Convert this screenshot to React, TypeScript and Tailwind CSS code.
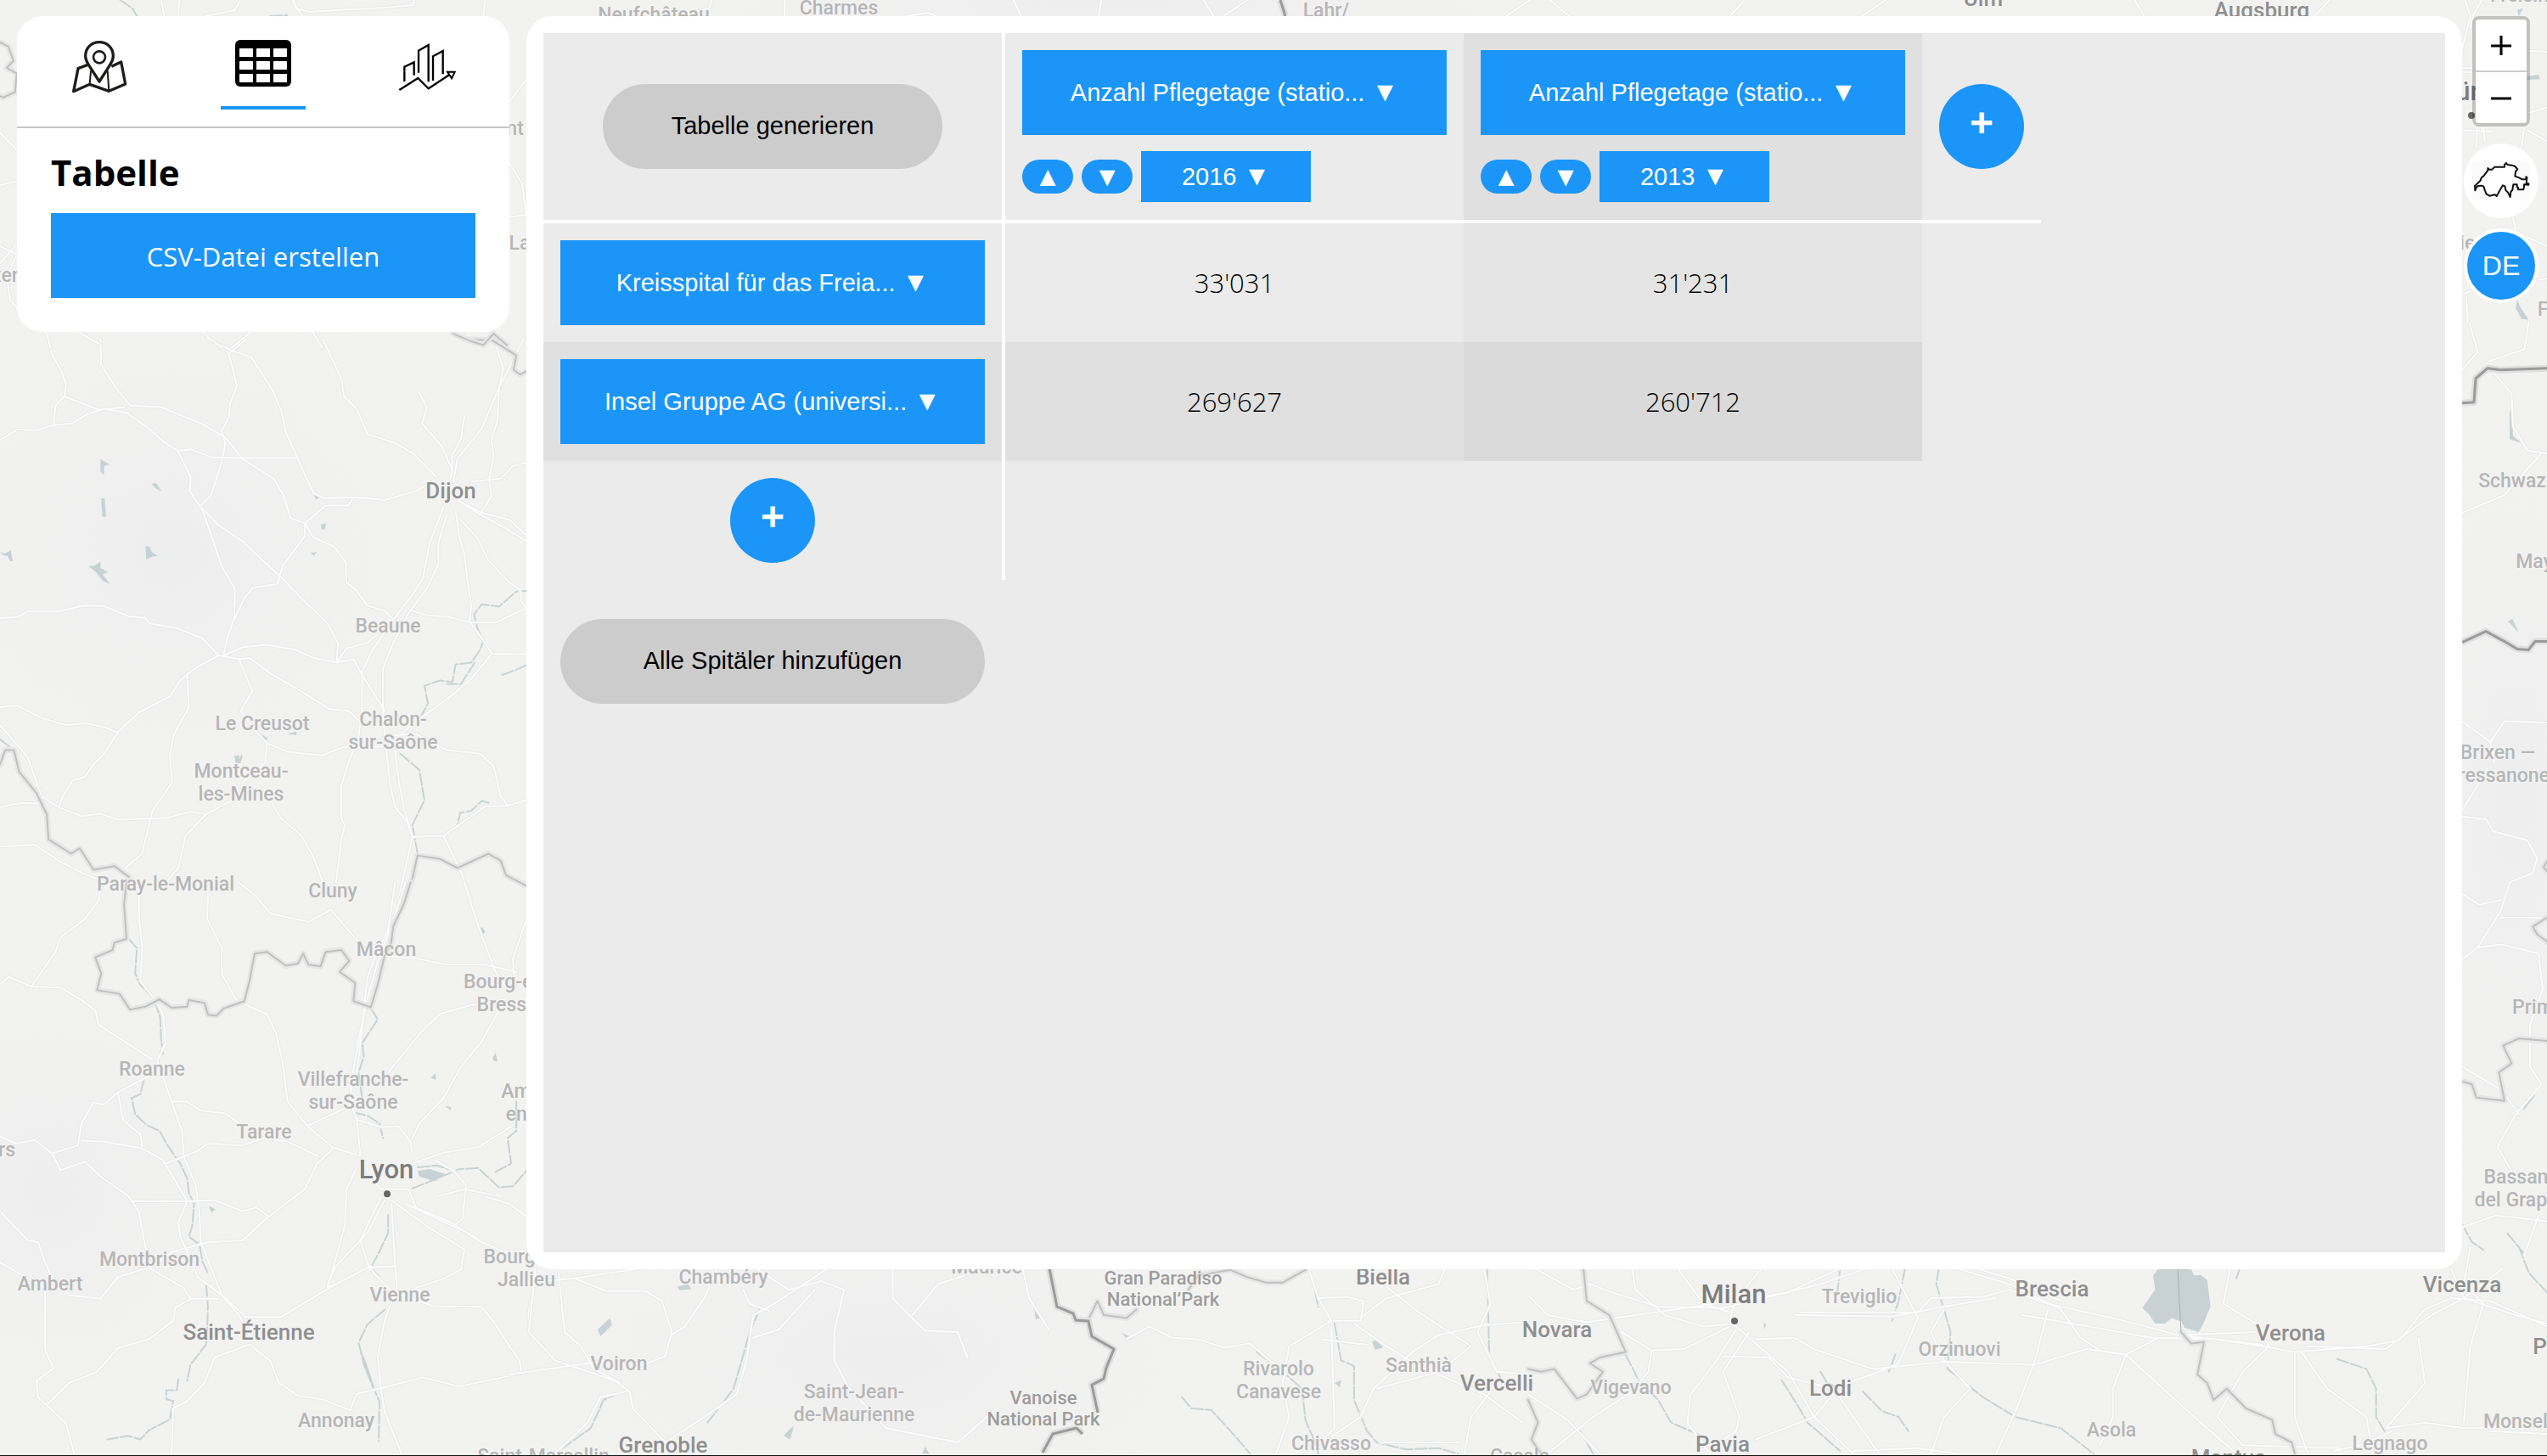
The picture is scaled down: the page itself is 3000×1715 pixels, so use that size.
import React, { useState } from "react";

/* ---------- Map background ---------- */

type Layer = { transform: string; roads: string[]; rivers: string[]; borders: string[]; lakes: string[] };

const LAYERS: Layer[] = [
  {
    transform: "translate(0 400) scale(0.40816 0.42091)",
    roads: [
      "M138 0L150 42L178 90L190 125L186 160L160 185L155 240L210 235L250 210L300 195L365 205L430 250L470 285L513 312L530 345L550 385L548 425L585 480L610 550L640 635L678 700L676 780L655 840L645 885",
      "M0 282L50 252L105 255L155 240",
      "M186 160L240 180L285 197L360 190",
      "M290 0L292 70L330 130L375 185L465 190L580 235L650 275L700 335L790 390L820 440L838 500L880 515L905 555L965 580L998 625L1000 680L1030 705L1060 745L1110 760L1135 785",
      "M600 0L680 35L725 50L785 140L812 200L825 260L855 325L880 380L905 430L935 445L1020 442L1110 450L1200 425L1235 405",
      "M710 0L660 40L684 130L664 180L660 220L640 255L650 290L642 335L610 435L580 465",
      "M513 312L550 308L610 330L700 332L855 332",
      "M580 470L630 520L700 565L770 630L805 660L870 725L945 795L975 850L972 905L1020 895L1045 940L1110 1040",
      "M880 515L880 550L815 635L800 685L730 695L705 725L678 780",
      "M880 515L940 465L1005 465L1020 442",
      "M932 0L985 110L993 160L1030 195L1060 265L1140 290L1190 318L1260 385",
      "M1208 145L1232 190L1218 235L1275 300L1305 365L1300 390",
      "M1340 215L1330 280L1305 325L1303 380",
      "M1510 0L1445 125L1390 250L1320 335L1308 400",
      "M1425 0L1452 80L1440 140L1435 230L1418 280L1425 330L1412 390L1418 440L1385 490",
      "M1519 345L1480 355L1445 390L1360 398",
      "M1320 450L1385 490L1460 530L1519 565",
      "M1330 455L1390 485L1470 505L1519 548",
      "M1280 470L1240 570L1220 670L1190 715L1135 785L1075 870L1045 930L1045 1040L1035 1110L1000 1200L985 1250L985 1340L995 1360L985 1400L970 1520",
      "M1290 490L1265 570L1265 630L1230 700L1180 765L1135 850L1105 920L1105 1040L1110 1110",
      "M1315 480L1325 550L1340 600L1350 680L1360 745L1355 790L1400 850L1420 880L1519 882",
      "M1325 500L1380 560L1410 620L1470 680L1500 700L1505 735L1519 752",
      "M1190 760L1230 772L1290 776L1360 793L1430 793L1519 752",
      "M1420 880L1360 950L1300 1000L1200 1070L1140 1120",
      "M0 780L50 778L80 762L170 762L240 745L300 747L370 775L420 780L430 795L510 808L585 838L630 885L690 895L720 892L780 935L860 980L950 1035L1005 1040L1040 1070",
      "M630 885L565 920L520 955L490 1000L400 1045L340 1100L300 1160L270 1190L245 1225L210 1235L180 1280L170 1310",
      "M645 885L700 862L770 855L850 868L900 890L972 905L1000 865L1060 850L1090 825",
      "M690 895L728 985L695 1040L740 1100L770 1130L765 1185L700 1240",
      "M540 935L545 1030L500 1110L490 1170L497 1240L440 1320L410 1440L350 1490",
      "M0 1030L50 1025L120 1060L190 1080L250 1075L300 1085L340 1102",
      "M0 1080L80 1170L120 1280L170 1310L235 1335L290 1328L340 1345L480 1340L550 1322L595 1330L700 1275",
      "M0 1310L60 1298L120 1300",
      "M0 1420L100 1415L170 1460L240 1495L300 1520",
      "M770 1130L830 1155L930 1165L990 1142L1105 1140",
      "M1110 1110L1200 1105L1290 1150L1385 1160L1425 1195L1445 1280L1465 1305L1519 1290",
      "M1115 1150L1125 1240L1140 1310L1175 1350L1190 1393L1280 1390L1400 1308L1465 1305",
      "M1140 1150L1150 1230L1165 1310L1190 1393L1170 1480L1150 1568",
      "M1280 1390L1330 1490L1360 1568",
      "M780 1290L810 1340L870 1390L905 1450L935 1530",
      "M595 1330L535 1390L515 1480L480 1520",
    ],
    rivers: [
      "M1519 704L1490 706L1440 748L1390 742L1368 770L1378 810L1395 845L1385 870L1360 905L1315 910L1305 960L1270 955L1225 970L1235 1020L1212 1060",
      "M1370 905L1330 965L1290 965",
      "M1155 1160L1210 1205L1225 1290L1190 1360L1205 1440",
      "M1519 912L1490 925L1448 940",
      "M1410 1298L1390 1292L1360 1320L1328 1325L1320 1360",
      "M0 1120L40 1150",
    ],
    borders: [
      "M1340 0L1390 2L1420 2L1490 45L1482 85L1500 98L1519 90",
      "M0 1190L15 1150L40 1150L55 1210L105 1270L135 1330L140 1400L205 1440L230 1425L270 1485L330 1475L372 1505",
      "M1205 1445L1270 1455L1320 1480L1410 1440L1445 1460L1460 1500L1519 1530",
      "M1205 1445L1190 1510L1168 1568",
    ],
    lakes: [
      "M290 335L316 350L300 355L300 380L290 370Z",
      "M437 405L450 402L466 425L450 418Z",
      "M292 445L302 445L306 498L295 495Z",
      "M420 578L432 580L438 595L455 607L440 608L422 617Z",
      "M255 635L275 632L290 622L290 640L312 652L296 658L318 685L298 676L275 650Z",
      "M0 595L14 600L32 590L34 608L38 622L28 620L22 606L10 605Z",
      "M926 518L940 516L938 532L928 532Z",
      "M897 598L915 595L905 607Z",
      "M905 436L925 441L912 448Z",
      "M676 1166L690 1164L690 1175L698 1160L700 1172L692 1188L680 1185Z",
      "M752 1105L775 1118L760 1122Z",
      "M828 1105L856 1098L855 1108Z",
    ],
  },
  {
    transform: "translate(0 1040) scale(0.40816 0.43048)",
    roads: [
      "M292 0L285 50L245 100L175 150L160 190L120 245L90 285L175 288L240 325L275 350L285 390L350 430L440 485",
      "M0 280L25 258L90 285",
      "M400 0L402 100L410 180L405 270L445 318L470 360L478 440L455 485",
      "M690 0L740 40L780 85L890 108L955 75L1000 125L1045 175",
      "M600 30L598 100L640 180L640 250L680 320L725 342L770 360L795 410L815 490L830 600L890 670L960 725L1040 750",
      "M1170 0L1130 120L1095 200L1060 320L1035 430L1015 540L1010 600L1030 650L1040 750",
      "M1140 0L1120 130L1080 210L1060 260L1045 400L1030 520",
      "M1340 0L1380 120L1430 245L1470 300",
      "M1100 200L1200 208L1290 225L1400 225L1490 245",
      "M1519 100L1480 210L1485 290",
      "M1460 320L1365 335L1270 360L1220 405L1120 520",
      "M1440 350L1390 435L1330 505L1280 590L1210 660L1190 700",
      "M455 490L495 600L525 680L530 750L565 830L575 900L580 985L640 1130L690 1185L720 1240",
      "M495 600L540 600L580 625L650 632L690 660",
      "M440 525L340 575L300 608L270 602L235 660L225 720L150 742L175 788L245 765L290 805L370 858L400 900L420 1000L430 1040",
      "M340 575L355 650L405 690L410 722",
      "M0 695L45 715L100 705L150 742",
      "M235 707L300 710L410 728L470 760L540 872L515 930L520 970L550 1030L570 1080L640 1130",
      "M380 873L540 873L620 870L700 900L740 890L775 915L700 980L600 985L500 1010L430 1055L340 1080L290 1140L200 1130L150 1080L130 1040L110 985L80 980L0 900",
      "M480 770L570 735L600 715L700 720L760 700L830 710L920 750",
      "M775 915L880 840L915 770L960 730",
      "M430 1055L530 1110L550 1140L505 1165L500 1200L430 1250L340 1275L280 1340L200 1370L135 1430",
      "M0 1040L45 1065L130 1110L130 1280L155 1330L105 1365L110 1410L190 1480L215 1568",
      "M640 1130L710 1190L810 1190L950 1110L1060 1055L1140 1050",
      "M550 1140L630 1140",
      "M720 1265L620 1300L590 1370L540 1420L500 1440L495 1568",
      "M720 1265L780 1310L805 1370L860 1405L930 1415L1010 1445L1030 1400L1100 1385L1220 1355L1325 1380L1450 1355L1568 1330",
      "M1030 650L1100 670L1150 668L1185 710L1190 740",
      "M1040 790L1090 830L1100 840L1180 840L1200 890L1300 930L1380 980L1450 1010",
      "M1130 870L1230 940L1340 1005L1330 1060L1280 1085L1200 1110",
      "M1190 770L1280 740L1380 725L1480 665",
      "M1110 870L1060 960L970 1050L945 1100",
      "M1130 880L1140 1050L1145 1110L1110 1200L1090 1300L1100 1390L1110 1450L1160 1568",
      "M1100 860L1040 980L1065 1055L1130 1120L1250 1160L1390 1162L1430 1210L1470 1270L1500 1310L1505 1345",
      "M1030 780L1000 840L995 940L960 1060L945 1110L1000 1085L1070 1050",
      "M1255 760L1310 790L1345 830L1335 920L1310 940",
      "M1400 860L1470 880L1519 915",
      "M1540 1110L1525 1180L1530 1240L1568 1270",
      "M890 665L970 630L1030 600",
      "M1260 860L1340 840L1450 860",
      "M1170 880L1350 960L1400 990",
    ],
    rivers: [
      "M372 155L395 180L390 250L405 280L445 320L462 370L465 430L470 470",
      "M415 540L405 580L380 590L390 635L425 665L460 680L480 715L520 770L540 810L545 850L560 880L555 940L545 970L575 990L585 1040L600 1070",
      "M595 1100L600 1160L598 1220L595 1265L550 1320L540 1365",
      "M515 1360L510 1390L480 1390L480 1415L500 1420L490 1470L430 1500L405 1525L370 1515L310 1525",
      "M1070 345L1090 375L1045 440L1050 475L1035 520L1045 590",
      "M1020 630L1060 638L1095 660L1105 700",
      "M1190 838L1250 815L1325 785L1380 782L1440 835L1480 832L1519 790",
      "M1205 780L1260 775L1310 790",
      "M1490 600L1490 680L1465 700L1475 770L1425 795",
      "M1120 910L1120 960L1090 1020L1070 1055L1095 1080",
      "M1110 1170L1060 1210L1035 1260L1050 1320L1080 1390L1095 1420L1093 1530",
    ],
    borders: [
      "M365 0L358 60L365 155L330 165L325 185L275 205L292 250L280 295L345 305L375 348L420 340L460 320L495 343L540 340L545 322L590 330L600 362L625 365L645 345L705 325L720 270L735 195L770 190L825 228L860 222L875 195L890 225L925 230L940 190L985 185L1008 215L980 245L1025 275L1020 325L1070 342",
      "M1185 0L1165 60L1135 120L1128 170L1110 200L1090 280L1070 342",
    ],
    lakes: [
      "M1205 790L1240 785L1285 798L1255 818L1210 805Z",
      "M1383 130L1392 122L1400 135L1388 148Z",
      "M1422 480L1430 466L1436 490L1424 488Z",
      "M1243 535L1257 522L1258 540Z",
      "M1283 612L1302 615L1300 624Z",
      "M602 885L622 895L610 903Z",
      "M1035 1265L1055 1310L1085 1395L1060 1350Z",
    ],
  },
  {
    transform: "translate(600 1470) scale(0.7653 0.33333)",
    roads: [
      "M40 75L30 300L70 400L160 470L185 510L190 570L240 690",
      "M75 75L85 300L110 350L130 430L170 480",
      "M0 130L100 110L200 75",
      "M100 110L150 155L210 155L235 190L250 300L240 385L190 430",
      "M320 75L300 180L270 280L250 310",
      "M490 75L400 210L375 240L365 400L350 520L300 600L240 690",
      "M380 75L430 150L480 120",
      "M480 120L515 150L500 300L500 400L520 490L580 640L690 690L750 570",
      "M375 320L415 290L470 150",
      "M360 150L370 200L400 225",
      "M590 75L590 180L620 250L640 295L690 300L705 390",
      "M620 240L660 130L700 100",
      "M790 75L800 180L830 290",
      "M0 450L60 430L150 400",
      "M180 510L140 530L120 620L70 730",
      "M950 325L985 280L1020 320L1060 325L1100 355L1140 340L1160 380L1195 450",
      "M1230 75L1245 180L1265 260L1200 350L1190 480L1200 600L1180 730",
      "M1245 180L1290 175L1315 190L1310 260L1260 260",
      "M1310 250L1350 180L1430 130L1440 75",
      "M1300 270L1350 350L1400 420L1500 520L1560 620",
      "M1250 325L1320 345",
      "M1568 265L1500 275L1430 310L1390 370L1330 500L1310 600L1265 670",
      "M1265 280L1270 640L1230 730",
      "M1335 500L1430 440L1480 350L1400 230L1350 140",
      "M1500 75L1510 200L1490 300L1520 440L1568 450",
      "M1510 510L1480 600L1470 730",
      "M1340 690L1460 690",
    ],
    rivers: [
      "M385 220L370 300L345 500L305 620",
      "M170 515L145 540L125 640L70 730",
      "M1035 530L1050 570L1080 575L1110 650L1140 730",
      "M1270 270L1280 400L1300 420L1300 540L1320 650L1335 690L1380 715L1430 710L1460 730",
      "M1150 370L1190 440L1220 500L1225 610L1240 690L1245 730",
      "M1505 75L1508 380L1525 460",
      "M1240 160L1245 210",
    ],
    borders: [
      "M890 260L905 190L915 240L950 250L965 220",
      "M1045 150L1060 100L1110 80L1135 105L1165 125L1190 125L1225 80",
    ],
    lakes: [
      "M155 250L158 275L140 315L136 290Z",
      "M258 140L275 130L280 148L262 152Z",
      "M438 630L432 680L422 665Z",
      "M808 220L818 250L810 255Z",
      "M942 303L960 320L952 328Z",
      "M1328 335L1336 320L1344 355L1332 362Z",
      "M1270 480L1280 470L1278 495Z",
      "M635 730L640 705L646 730Z",
    ],
  },
  {
    transform: "translate(1800 1470) scale(0.7653 0.33333)",
    roads: [
      "M0 170L30 240L90 265L150 245L270 205L400 160L480 75",
      "M10 75L70 150L95 130L130 160L200 210L300 215L450 130L520 75",
      "M160 75L165 150L210 240L270 280L320 270",
      "M230 75L270 200L310 230",
      "M360 75L320 180L310 260L330 300L400 440L440 600L500 730",
      "M410 240L560 245L640 210L720 180",
      "M420 230L600 230L620 180L700 175L740 150L800 200L900 250L1000 310L1130 345",
      "M760 240L850 275L960 320L1060 325L1130 350L1180 370",
      "M660 75L740 130L820 220L850 320L880 365L920 380L1020 590L1090 730",
      "M690 75L740 110L820 190",
      "M0 520L60 610L110 730",
      "M130 280L190 365L240 360L310 280",
      "M190 365L185 440L160 510L100 600L30 730",
      "M320 290L290 400L250 520L245 620L280 730",
      "M340 300L300 440L325 600L320 650L300 680",
      "M350 325L410 320L440 360L530 430L640 405L780 415L860 360L920 380",
      "M540 440L480 490L440 600L350 680",
      "M300 385L370 390L400 460L470 500L540 730",
      "M640 220L620 300L640 400L680 500L640 600L620 730",
      "M800 220L780 400L750 580L720 730",
      "M970 320L920 380L900 500L900 600L880 700",
      "M1080 75L1070 200L1120 270L1140 350L1100 440L1060 600L1100 700L1250 710",
      "M1180 370L1180 600L1200 730",
      "M1190 370L1230 500L1290 600L1300 730",
      "M1120 300L1000 310",
      "M1180 370L1290 350L1340 330L1380 220L1420 180L1480 190L1568 280",
      "M1200 350L1320 360L1390 240L1440 180L1500 75",
      "M1370 320L1380 480L1320 640L1380 620L1440 640L1568 630",
      "M1450 0L1440 130L1470 200L1450 350L1440 620",
      "M1420 75L1440 180L1520 240L1568 270",
      "M1330 650L1280 700L1240 720",
      "M1480 650L1568 660",
      "M500 720L600 710L660 730",
      "M560 75L600 250L570 410L540 440",
    ],
    rivers: [
      "M150 380L170 470L200 540L220 620L270 670",
      "M390 470L415 560L430 620L480 720",
      "M480 75L476 160",
      "M580 75L570 190L560 260",
      "M632 75L628 130L640 220L650 300L645 430L700 530L750 600L820 640L870 730",
      "M565 380L555 440",
      "M515 510L545 580L570 600L585 650",
      "M450 440L460 480L480 500",
      "M1245 395L1290 430L1305 500L1305 600L1318 650",
      "M1095 75L1090 110",
      "M80 650L100 730",
      "M1525 0L1540 90L1568 160",
    ],
    borders: [
      "M85 75L90 190L125 240L150 370L110 390L95 410L115 440L90 520L75 535L60 490L40 430L20 440L0 430",
      "M1005 300L1020 340L1040 335L1030 450L1045 480L1055 540L1075 500L1105 570L1145 610L1150 660L1175 690L1180 730",
      "M0 540L15 620L5 680L20 730",
    ],
    lakes: [
      "M970 75H1020L1025 100L1035 98L1045 115L1050 210L1040 265L1032 300L1010 285L1005 262L990 250L980 270L965 270L955 235L945 215L965 150L962 100Z",
      "M362 265L366 275L363 290Z",
    ],
  },
  {
    transform: "translate(2860 380) scale(0.33333 0.70153)",
    roads: [
      "M145 0L175 50L120 80",
      "M355 0L340 45L215 65",
      "M215 75L295 120L300 175L350 215L420 220",
      "M120 320L270 290L400 220",
      "M120 670L220 705L270 670L420 672",
      "M235 740L220 705",
      "M120 820L210 750",
      "M120 830L205 835L230 855L350 870L385 900L370 925L290 940L255 990L175 1050L120 1070",
      "M120 960L180 978L260 970",
      "M255 1000L420 1000",
      "M175 1050L260 1045L390 1060L405 1120L360 1180L360 1250L400 1280L310 1330L245 1385L300 1430",
      "M120 1250L260 1290L320 1330",
      "M120 1520L240 1500L420 1510",
      "M340 1568L390 1500",
    ],
    rivers: ["M120 1515L155 1545L195 1558", "M280 1530L340 1565"],
    borders: [
      "M120 1275L155 1280L170 1302L270 1308L250 1260L295 1245L265 1215L320 1203L420 1207",
      "M420 1000L370 1015L385 1028L420 1040",
      "M420 905L408 915L420 922",
    ],
    lakes: ["M288 148H299V190L330 203L288 196Z", "M282 502L298 498L320 521Z", "M335 1325L345 1305L380 1298Z"],
  },
  {
    transform: "scale(0.3954 0.33333)",
    roads: [
      "M480 0L490 57",
      "M535 0L530 57",
      "M716 0L700 37L610 57",
      "M875 0L880 30L925 42L1010 35L1140 28L1230 18L1235 0",
      "M870 0L900 57",
      "M1445 0L1440 57",
      "M0 470L50 530",
      "M0 655L50 640",
      "M0 870L50 900L20 980L30 1060L80 1130L140 1180L150 1230",
      "M0 930L45 870",
      "M230 1172L295 1215",
      "M600 1172L660 1230",
      "M750 1172L690 1230",
      "M1568 280L1517 360",
      "M1517 575L1555 650L1568 760L1517 768",
      "M930 1172L960 1230",
    ],
    rivers: ["M358 0L395 30L408 57", "M805 57L855 54"],
    borders: ["M0 150L25 165L40 215L20 240L50 260L45 325L10 345L0 340", "M1350 1180L1400 1205L1440 1220L1470 1180L1510 1220"],
    lakes: [],
  },
  {
    transform: "translate(620 0) scale(0.57398 0.33333)",
    roads: [
      "M380 0L375 30L310 57",
      "M530 0L530 57",
      "M780 57L825 45L840 57",
      "M1000 0L1015 57",
      "M1180 0L1175 57",
      "M1390 0L1410 57",
      "M1480 0L1430 57",
      "M2060 0L2010 57",
      "M2100 0L2140 57",
      "M2500 0L2470 57",
      "M2790 0L2740 57",
      "M3300 0L3320 57",
      "M3700 0L3670 57",
    ],
    rivers: [],
    borders: [],
    lakes: [],
  },
  {
    transform: "translate(2860 0) scale(0.33333)",
    roads: [
      "M130 0L150 57L120 170L120 200",
      "M190 0L160 50L150 100",
      "M120 240L160 240",
      "M120 255L160 255",
      "M350 180L420 182",
      "M350 400L420 380",
      "M175 450L170 520",
      "M195 450L200 500",
      "M340 450L330 520L300 560",
      "M350 460L420 500",
      "M120 460L230 465",
      "M300 770L310 820L420 870",
      "M135 1050L140 1140",
      "M390 990L420 985",
      "M120 1040L150 1030",
    ],
    rivers: [],
    borders: [],
    lakes: ["M350 270L390 264L395 280L350 282Z", "M315 35L335 30L320 57Z", "M315 1060L325 1085L355 1130L330 1128L310 1090Z"],
  },
];

const STRONG_BORDERS = [
  "M1236 1495L1245 1540L1264 1548L1267 1556L1282 1557L1286 1575L1312 1590L1303 1612L1300 1625L1286 1632L1293 1665",
  "M1275 1690L1268 1683L1240 1690L1228 1712",
  "M2900 475L2914 474L2916 446L2930 434L2945 436L3000 434",
  "M2900 757L2928 744L2950 756L2965 765L2978 766L2986 756L3000 756",
  "M1508 0L1514 19",
];

const LINE = "fill-none";

function MapDrawing() {
  return (
    <svg className="h-full w-full" viewBox="0 0 3000 1715" preserveAspectRatio="none" aria-hidden="true">
      <defs>
        <radialGradient id="relief">
          <stop offset="0" stopColor="#ebecec" stopOpacity="0.7" />
          <stop offset="1" stopColor="#f2f2f1" stopOpacity="0" />
        </radialGradient>
      </defs>
      <rect width="3000" height="1715" fill="#f2f2f1" />
      <ellipse cx="200" cy="650" rx="380" ry="350" fill="url(#relief)" />
      <ellipse cx="60" cy="1400" rx="260" ry="300" fill="url(#relief)" />
      <ellipse cx="1050" cy="1600" rx="520" ry="260" fill="url(#relief)" />
      <ellipse cx="2960" cy="950" rx="200" ry="600" fill="url(#relief)" />
      <ellipse cx="1300" cy="0" rx="700" ry="100" fill="url(#relief)" />
      {LAYERS.map((layer) => (
        <g key={layer.transform} transform={layer.transform} strokeLinejoin="round" strokeLinecap="round">
          {layer.lakes.map((d) => (
            <path key={d} d={d} fill="#c8d1d3" />
          ))}
          {layer.rivers.map((d) => (
            <path key={d} d={d} className={LINE} stroke="#c9d2d4" strokeWidth="2" strokeDasharray="14 3" vectorEffect="non-scaling-stroke" />
          ))}
          {layer.roads.map((d) => (
            <path key={d} d={d} className={LINE} stroke="#e9eaea" strokeWidth="4" vectorEffect="non-scaling-stroke" />
          ))}
          {layer.roads.map((d) => (
            <path key={"top" + d} d={d} className={LINE} stroke="#fcfcfc" strokeWidth="2" vectorEffect="non-scaling-stroke" />
          ))}
          {layer.borders.map((d) => (
            <path key={d} d={d} className={LINE} stroke="#e6e6e6" strokeWidth="7" vectorEffect="non-scaling-stroke" />
          ))}
          {layer.borders.map((d) => (
            <path key={"top" + d} d={d} className={LINE} stroke="#bfc0c0" strokeWidth="2" vectorEffect="non-scaling-stroke" />
          ))}
        </g>
      ))}
      <path d="M2565 1495L2569 1570" stroke="#a9b0b2" strokeWidth="1" />
      {STRONG_BORDERS.map((d) => (
        <g key={d} className={LINE} strokeLinejoin="round">
          <path d={d} stroke="#dfdfdf" strokeWidth="8" />
          <path d={d} stroke="#9b9b9b" strokeWidth="3" />
        </g>
      ))}
      <circle cx="456" cy="1407" r="4" fill="#666666" />
      <circle cx="2043" cy="1557" r="4" fill="#666666" />
      <circle cx="2911" cy="136" r="4" fill="#666666" />
    </svg>
  );
}

type Place = { x: number; y: number; lines: string[]; kind: "town" | "city" | "capital" | "park" };

/* Label centres on a 3000 x 1715 map sheet. */
const PLACES: Place[] = [
  { x: 770, y: 17, lines: ["Neufchâteau"], kind: "town" },
  { x: 988, y: 9, lines: ["Charmes"], kind: "town" },
  { x: 1562, y: 12, lines: ["Lahr/"], kind: "town" },
  { x: 2336, y: -2, lines: ["Ulm"], kind: "city" },
  { x: 2664, y: 12, lines: ["Augsburg"], kind: "city" },
  { x: 2974, y: -6, lines: ["Freising"], kind: "town" },
  { x: 590, y: 151, lines: ["Mont"], kind: "town" },
  { x: 612, y: 286, lines: ["La"], kind: "town" },
  { x: -8, y: 324, lines: ["Auxer"], kind: "town" },
  { x: 2896, y: 108, lines: ["Mün"], kind: "capital" },
  { x: 2896, y: 286, lines: ["Wie"], kind: "town" },
  { x: 3008, y: 364, lines: ["Füg"], kind: "town" },
  { x: 531, y: 578, lines: ["Dijon"], kind: "city" },
  { x: 457, y: 737, lines: ["Beaune"], kind: "town" },
  { x: 309, y: 852, lines: ["Le Creusot"], kind: "town" },
  { x: 463, y: 862, lines: ["Chalon-", "sur-Saône"], kind: "town" },
  { x: 284, y: 923, lines: ["Montceau-", "les-Mines"], kind: "town" },
  { x: 195, y: 1042, lines: ["Paray-le-Monial"], kind: "town" },
  { x: 392, y: 1050, lines: ["Cluny"], kind: "town" },
  { x: 455, y: 1119, lines: ["Mâcon"], kind: "town" },
  { x: 597, y: 1171, lines: ["Bourg-en-", "Bresse"], kind: "town" },
  { x: 179, y: 1260, lines: ["Roanne"], kind: "town" },
  { x: 416, y: 1286, lines: ["Villefranche-", "sur-Saône"], kind: "town" },
  { x: 311, y: 1334, lines: ["Tarare"], kind: "town" },
  { x: 644, y: 1300, lines: ["Ambérieu-", "en-Bugey"], kind: "town" },
  { x: 8, y: 1355, lines: ["rs"], kind: "town" },
  { x: 455, y: 1379, lines: ["Lyon"], kind: "capital" },
  { x: 176, y: 1484, lines: ["Montbrison"], kind: "town" },
  { x: 59, y: 1513, lines: ["Ambert"], kind: "town" },
  { x: 471, y: 1526, lines: ["Vienne"], kind: "town" },
  { x: 620, y: 1495, lines: ["Bourgoin-", "Jallieu"], kind: "town" },
  { x: 293, y: 1570, lines: ["Saint-Étienne"], kind: "city" },
  { x: 396, y: 1674, lines: ["Annonay"], kind: "town" },
  { x: 640, y: 1716, lines: ["Saint-Marcellin"], kind: "town" },
  { x: 852, y: 1505, lines: ["Chambéry"], kind: "town" },
  { x: 1162, y: 1493, lines: ["Maurice"], kind: "town" },
  { x: 1370, y: 1519, lines: ["Gran Paradiso", "National’Park"], kind: "park" },
  { x: 1629, y: 1505, lines: ["Biella"], kind: "city" },
  { x: 729, y: 1607, lines: ["Voiron"], kind: "town" },
  { x: 781, y: 1703, lines: ["Grenoble"], kind: "city" },
  { x: 1006, y: 1654, lines: ["Saint-Jean-", "de-Maurienne"], kind: "town" },
  { x: 1229, y: 1660, lines: ["Vanoise", "National Park"], kind: "park" },
  { x: 1506, y: 1627, lines: ["Rivarolo", "Canavese"], kind: "town" },
  { x: 1671, y: 1609, lines: ["Santhià"], kind: "town" },
  { x: 1763, y: 1630, lines: ["Vercelli"], kind: "city" },
  { x: 1568, y: 1701, lines: ["Chivasso"], kind: "town" },
  { x: 1790, y: 1716, lines: ["Casale"], kind: "town" },
  { x: 1834, y: 1567, lines: ["Novara"], kind: "city" },
  { x: 2042, y: 1526, lines: ["Milan"], kind: "capital" },
  { x: 2190, y: 1528, lines: ["Treviglio"], kind: "town" },
  { x: 2417, y: 1519, lines: ["Brescia"], kind: "city" },
  { x: 2698, y: 1571, lines: ["Verona"], kind: "city" },
  { x: 2900, y: 1514, lines: ["Vicenza"], kind: "city" },
  { x: 2308, y: 1590, lines: ["Orzinuovi"], kind: "town" },
  { x: 1921, y: 1635, lines: ["Vigevano"], kind: "town" },
  { x: 2156, y: 1636, lines: ["Lodi"], kind: "city" },
  { x: 2029, y: 1702, lines: ["Pavia"], kind: "city" },
  { x: 2487, y: 1685, lines: ["Asola"], kind: "town" },
  { x: 2815, y: 1701, lines: ["Legnago"], kind: "town" },
  { x: 2978, y: 1675, lines: ["Monselice"], kind: "town" },
  { x: 2625, y: 1718, lines: ["Mantua"], kind: "city" },
  { x: 3020, y: 1587, lines: ["Padua"], kind: "city" },
  { x: 2959, y: 566, lines: ["Schwaz"], kind: "town" },
  { x: 3006, y: 661, lines: ["Mayrhof"], kind: "town" },
  { x: 2942, y: 901, lines: ["Brixen —", "Bressanone"], kind: "town" },
  { x: 2994, y: 1187, lines: ["Primör"], kind: "town" },
  { x: 2970, y: 1401, lines: ["Bassano", "del Grappa"], kind: "town" },
];

const PLACE_STYLES = {
  town: "text-[23px] leading-[27px] text-[#b6b6b6]",
  city: "text-[26px] leading-[27px] text-[#8f8f8f]",
  capital: "text-[31px] leading-[36px] text-[#7d7d7d]",
  park: "text-[22px] leading-[25px] text-[#9c9c9c]",
};

function MapBackground() {
  return (
    <div className="absolute inset-0 overflow-hidden border-b border-[#10140f] bg-[#f2f2f1]">
      <MapDrawing />
      {PLACES.map((p) => (
        <div
          key={p.lines.join(" ") + p.x}
          className={
            "absolute -translate-x-1/2 -translate-y-1/2 whitespace-nowrap text-center font-['Roboto',sans-serif] font-medium [text-shadow:0_0_2px_#f6f6f6,0_0_3px_#f6f6f6] " +
            PLACE_STYLES[p.kind]
          }
          style={{ left: `${(p.x / 3000) * 100}%`, top: `${(p.y / 1715) * 100}%` }}
        >
          {p.lines.map((line) => (
            <div key={line}>{line}</div>
          ))}
        </div>
      ))}
    </div>
  );
}

/* ---------- Icons ---------- */

function MapPinIcon() {
  return (
    <svg className="h-[66px] w-[66px]" viewBox="0 -3 198 198" fill="none" stroke="#1d1d1b" strokeWidth="10" strokeLinejoin="round" aria-hidden="true">
      <path d="M99 156L63 100C54 86 50 78 50 66C50 36 72 17 99 17C126 17 148 36 148 66C148 78 144 86 135 100Z" />
      <circle cx="99" cy="70" r="21" strokeWidth="8" />
      <path d="M58 97L24 110L8 191L65 166L133 190L191 165L176 87L142 103" />
      <path d="M69 118L65 166M128 118L133 190" strokeWidth="6" />
    </svg>
  );
}

function TableIcon() {
  return (
    <svg className="h-[66px] w-[66px]" viewBox="0 1 66 66" aria-hidden="true">
      <rect x="0" y="5" width="66" height="55" rx="6" fill="#000" />
      {[15, 30, 45].map((y) =>
        [5, 25, 45].map((x) => <rect key={`${x}-${y}`} x={x} y={y} width="16" height="10" rx="0.5" fill="#fff" />)
      )}
    </svg>
  );
}

function ChartIcon() {
  return (
    <svg className="h-[66px] w-[68px]" viewBox="0 -7 204 198" fill="none" stroke="#000" strokeWidth="7" aria-hidden="true">
      <path d="M22 152V100L56 84V130M72 121V43L107 23V153M123 149V63L158 44V126" />
      <path d="M4 182L70 140L107 177L180 129" />
      <path d="M174 118H200L189 141Z" strokeWidth="6" />
    </svg>
  );
}

function SwissIcon() {
  return (
    <svg className="h-[44px] w-[68px]" viewBox="0 0 204 132" aria-hidden="true">
      <rect width="204" height="132" fill="#fafafa" />
      <path
        d="M10 100L9 84L28 66L33 54L40 49L55 29V21L60 26H70L79 17H114V9L120 3L124 9L140 11L151 15L160 25L153 33L151 50L166 55L176 61L190 60V52L193 53L191 76H199V80L183 79V86L181 97H162V90L158 88V79H145L142 98L136 105L134 123L126 107L118 99L115 85L108 82L98 98L86 120L80 115L61 119L50 113L45 101L40 86L33 83L20 84L14 90Z"
        fill="#fff"
        stroke="#111"
        strokeWidth="6"
        strokeLinejoin="round"
      />
    </svg>
  );
}

/* ---------- Sidebar ---------- */

const TABS = [
  { id: "map", label: "Karte", icon: <MapPinIcon /> },
  { id: "table", label: "Tabelle", icon: <TableIcon /> },
  { id: "chart", label: "Diagramm", icon: <ChartIcon /> },
];

function Sidebar() {
  const [active, setActive] = useState("table");
  return (
    <aside className="w-[580px] shrink-0 rounded-[30px] bg-white">
      <nav className="grid grid-cols-3 justify-items-center border-b-2 border-[#c8c8c8] pt-[10px] pb-5">
        {TABS.map((tab) => (
          <button
            key={tab.id}
            type="button"
            aria-label={tab.label}
            onClick={() => setActive(tab.id)}
            className={
              "flex h-[100px] w-[100px] items-start justify-center border-b-4 pt-[14px] " +
              (active === tab.id ? "border-[#1b95f8]" : "border-transparent")
            }
          >
            {tab.icon}
          </button>
        ))}
      </nav>
      <div className="px-10 pt-[22px] pb-10 font-['Open_Sans','Noto_Sans',sans-serif]">
        <h1 className="mb-[18px] text-[42px] leading-[60px] font-bold text-black">Tabelle</h1>
        <button type="button" className="h-[100px] w-full bg-[#1b95f8] pt-[2px] text-[31px] text-white">
          CSV-Datei erstellen
        </button>
      </div>
    </aside>
  );
}

/* ---------- Table ---------- */

function DownMark() {
  return <span className="text-[32px] leading-none">▼</span>;
}

function Picker({ children }: { children: React.ReactNode }) {
  return (
    <button type="button" aria-haspopup="listbox" className="block h-[100px] w-full bg-[#1b95f8] text-[29px] leading-10 text-white">
      {children} <DownMark />
    </button>
  );
}

function SortButton({ label, glyph }: { label: string; glyph: string }) {
  return (
    <button type="button" aria-label={label} className="flex h-10 w-[60px] items-center justify-center rounded-full bg-[#1b95f8] text-[32px] leading-10 text-white">
      {glyph}
    </button>
  );
}

function AddButton({ label }: { label: string }) {
  return (
    <button type="button" aria-label={label} className="mx-auto flex h-[100px] w-[100px] items-center justify-center rounded-full bg-[#1b95f8] pb-2 text-[48px] leading-[48px] font-bold text-white">
      +
    </button>
  );
}

const COLUMNS = [
  { title: "Anzahl Pflegetage (statio...", year: "2016" },
  { title: "Anzahl Pflegetage (statio...", year: "2013" },
];

const ROWS = [
  { name: "Kreisspital für das Freia...", values: ["33'031", "31'231"] },
  { name: "Insel Gruppe AG (universi...", values: ["269'627", "260'712"] },
];

const CELL_SHADES = [
  ["bg-[#ebebeb]", "bg-[#e4e4e4]"],
  ["bg-[#e0e0e0]", "bg-[#dadada]"],
];

function DataTable() {
  return (
    <table className="w-[1764px] table-fixed border-separate border-spacing-0 font-normal">
      <colgroup>
        <col className="w-[544px]" />
        <col className="w-[540px]" />
        <col className="w-[540px]" />
        <col className="w-[140px]" />
      </colgroup>
      <thead>
        <tr className="h-[224px]">
          <td className="border-r-4 border-b-4 border-white p-0 text-center">
            <button type="button" className="h-[100px] w-[400px] rounded-full bg-[#cccccc] text-[29px] text-black">
              Tabelle generieren
            </button>
          </td>
          {COLUMNS.map((col, i) => (
            <th key={col.year} scope="col" className={"border-b-4 border-white px-5 pt-5 pb-0 align-top font-normal " + (i % 2 ? "bg-[#e0e0e0]" : "bg-[#ebebeb]")}>
              <Picker>{col.title}</Picker>
              <div className="mt-[19px] flex items-center gap-[10px]">
                <SortButton label="Aufsteigend sortieren" glyph="▲" />
                <SortButton label="Absteigend sortieren" glyph="▼" />
                <button type="button" aria-haspopup="listbox" className="h-[60px] w-[200px] bg-[#1b95f8] text-[29px] leading-10 text-white">
                  {col.year} <DownMark />
                </button>
              </div>
            </th>
          ))}
          <td className="border-b-4 border-white p-0">
            <AddButton label="Spalte hinzufügen" />
          </td>
        </tr>
      </thead>
      <tbody>
        {ROWS.map((row, r) => (
          <tr key={row.name} className="h-[140px]">
            <th scope="row" className={"border-r-4 border-white px-5 py-0 font-normal " + CELL_SHADES[r][0]}>
              <Picker>{row.name}</Picker>
            </th>
            {row.values.map((value, c) => (
              <td key={value} className={"p-0 text-center font-['Open_Sans','Noto_Sans',sans-serif] text-[31px] font-light " + CELL_SHADES[r][c]}>
                {value}
              </td>
            ))}
            <td className="p-0" />
          </tr>
        ))}
        <tr className="h-[140px]">
          <td className="border-r-4 border-white p-0">
            <AddButton label="Spital hinzufügen" />
          </td>
          <td colSpan={3} className="p-0" />
        </tr>
      </tbody>
    </table>
  );
}

/* ---------- Map controls ---------- */

function MapControls() {
  return (
    <div className="mr-[10px] ml-[2px] flex shrink-0 flex-col items-center">
      <div className="rounded-lg border-4 border-black/20 bg-clip-padding">
        <button type="button" aria-label="Vergrössern" className="flex h-[62px] w-[60px] items-center justify-center rounded-t-[4px] border-b-2 border-[#cccccc] bg-white">
          <svg className="h-6 w-6" viewBox="0 0 24 24" stroke="#000" strokeWidth="3" aria-hidden="true">
            <path d="M0 13H24M12 1V24" />
          </svg>
        </button>
        <button type="button" aria-label="Verkleinern" className="flex h-[60px] w-[60px] items-center justify-center rounded-b-[4px] bg-white">
          <svg className="h-6 w-6" viewBox="0 0 24 24" stroke="#000" strokeWidth="3" aria-hidden="true">
            <path d="M0 13H24" />
          </svg>
        </button>
      </div>
      <button type="button" aria-label="Schweiz anzeigen" className="mt-5 flex h-[88px] w-[88px] items-center justify-center rounded-full bg-white">
        <SwissIcon />
      </button>
      <button type="button" className="mt-3 h-[88px] w-[88px] rounded-full border-4 border-white bg-[#1b95f8] text-[32px] text-white">
        DE
      </button>
    </div>
  );
}

export default function App() {
  return (
    <div className="relative min-h-screen overflow-hidden font-['Liberation_Sans',Arial,sans-serif]">
      <MapBackground />
      <div className="relative flex items-start pt-[19px] pl-5">
        <Sidebar />
        <main className="ml-5 h-[calc(100vh-239px)] min-w-0 flex-1 rounded-[30px] bg-white p-5">
          <div className="h-full overflow-auto bg-[#ebebeb]">
            <DataTable />
            <div className="px-5 pt-[46px]">
              <button type="button" className="h-[100px] w-[500px] rounded-full bg-[#cccccc] text-[29px] text-black">
                Alle Spitäler hinzufügen
              </button>
            </div>
          </div>
        </main>
        <MapControls />
      </div>
    </div>
  );
}
